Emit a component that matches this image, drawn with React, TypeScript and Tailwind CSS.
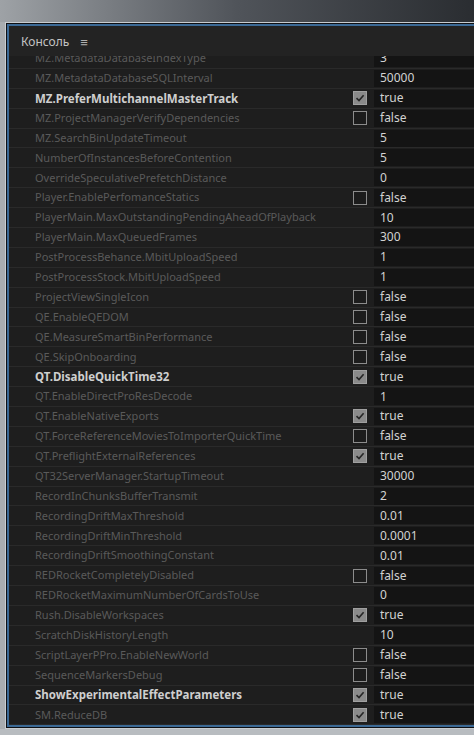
import React from 'react';

type Row = { name: string; value: string; check?: boolean; bold?: boolean };

const rows: Row[] = [
  { name: 'MZ.MetadataDatabaseIndexType', value: '3' },
  { name: 'MZ.MetadataDatabaseSQLInterval', value: '50000' },
  { name: 'MZ.PreferMultichannelMasterTrack', value: 'true', check: true, bold: true },
  { name: 'MZ.ProjectManagerVerifyDependencies', value: 'false', check: false },
  { name: 'MZ.SearchBinUpdateTimeout', value: '5' },
  { name: 'NumberOfInstancesBeforeContention', value: '5' },
  { name: 'OverrideSpeculativePrefetchDistance', value: '0' },
  { name: 'Player.EnablePerfomanceStatics', value: 'false', check: false },
  { name: 'PlayerMain.MaxOutstandingPendingAheadOfPlayback', value: '10' },
  { name: 'PlayerMain.MaxQueuedFrames', value: '300' },
  { name: 'PostProcessBehance.MbitUploadSpeed', value: '1' },
  { name: 'PostProcessStock.MbitUploadSpeed', value: '1' },
  { name: 'ProjectViewSingleIcon', value: 'false', check: false },
  { name: 'QE.EnableQEDOM', value: 'false', check: false },
  { name: 'QE.MeasureSmartBinPerformance', value: 'false', check: false },
  { name: 'QE.SkipOnboarding', value: 'false', check: false },
  { name: 'QT.DisableQuickTime32', value: 'true', check: true, bold: true },
  { name: 'QT.EnableDirectProResDecode', value: '1' },
  { name: 'QT.EnableNativeExports', value: 'true', check: true },
  { name: 'QT.ForceReferenceMoviesToImporterQuickTime', value: 'false', check: false },
  { name: 'QT.PreflightExternalReferences', value: 'true', check: true },
  { name: 'QT32ServerManager.StartupTimeout', value: '30000' },
  { name: 'RecordInChunksBufferTransmit', value: '2' },
  { name: 'RecordingDriftMaxThreshold', value: '0.01' },
  { name: 'RecordingDriftMinThreshold', value: '0.0001' },
  { name: 'RecordingDriftSmoothingConstant', value: '0.01' },
  { name: 'REDRocketCompletelyDisabled', value: 'false', check: false },
  { name: 'REDRocketMaximumNumberOfCardsToUse', value: '0' },
  { name: 'Rush.DisableWorkspaces', value: 'true', check: true },
  { name: 'ScratchDiskHistoryLength', value: '10' },
  { name: 'ScriptLayerPPro.EnableNewWorld', value: 'false', check: false },
  { name: 'SequenceMarkersDebug', value: 'false', check: false },
  { name: 'ShowExperimentalEffectParameters', value: 'true', check: true, bold: true },
  { name: 'SM.ReduceDB', value: 'true', check: true },
];

const Checkbox: React.FC<{ checked: boolean }> = ({ checked }) =>
  checked ? (
    <div className="w-[14px] h-[14px] bg-[#8a8a8a] border border-[#a0a0a0] flex items-center justify-center">
      <svg width="10" height="10" viewBox="0 0 10 10">
        <path d="M1.5 5.2 L4 7.6 L8.6 2.2" fill="none" stroke="#262626" strokeWidth="1.6" />
      </svg>
    </div>
  ) : (
    <div className="w-[14px] h-[14px] bg-[#1c1c1c] border border-[#8c8c8c]" />
  );

export default function App() {
  return (
    <div
      className="w-[474px] h-[735px] overflow-hidden flex flex-col bg-[#b4b8bc]"
      style={{ fontFamily: '"Noto Sans", "Open Sans", sans-serif' }}
    >
      <div className="h-[22px] shrink-0 bg-gradient-to-r from-[#9ea2a6] via-[#50545a] to-[#2a2d31]" />
      <div className="flex-1 flex pl-[5px] bg-[#a8acb0]">
        <div className="flex-1 border-l border-t border-b border-[#c8ccd0] flex">
          <div className="flex-1 border-l border-t border-b border-[#0e1014] flex">
            <div className="flex-1 border-l-2 border-t-2 border-b-2 border-[#3c6a96] bg-[#1e1e1e] flex flex-col overflow-hidden">
              <div className="h-[30px] shrink-0 flex items-center pl-[12px] pt-[2px] gap-[11px] bg-[#232323] relative z-10">
                <span className="text-[12px] text-[#c4c4c4]">Консоль</span>
                <span className="text-[13px] text-[#b0b0b0] leading-none">≡</span>
              </div>
              <div className="flex-1 overflow-hidden -mt-[7px]">
                {rows.map((r) => (
                  <div key={r.name} className="h-[19.9px] flex items-center border-b border-[#2a2a2a]">
                    <div
                      className={
                        'flex-1 pl-[26px] whitespace-nowrap overflow-hidden ' +
                        (r.bold ? 'text-[11.5px] font-bold text-[#cfcfcf]' : 'text-[11px] text-[#5a5a5a]')
                      }
                    >
                      {r.name}
                    </div>
                    <div className="w-[14px] mr-[7px] flex items-center">
                      {r.check !== undefined && <Checkbox checked={r.check} />}
                    </div>
                    <div className="w-[100px] h-[17px] bg-[#141414] flex items-center pl-[6px] text-[12px] text-[#d2d2d2]">
                      {r.value}
                    </div>
                  </div>
                ))}
              </div>
            </div>
          </div>
        </div>
      </div>
      <div className="h-[6px] shrink-0 bg-[#b8bcc0]" />
    </div>
  );
}
